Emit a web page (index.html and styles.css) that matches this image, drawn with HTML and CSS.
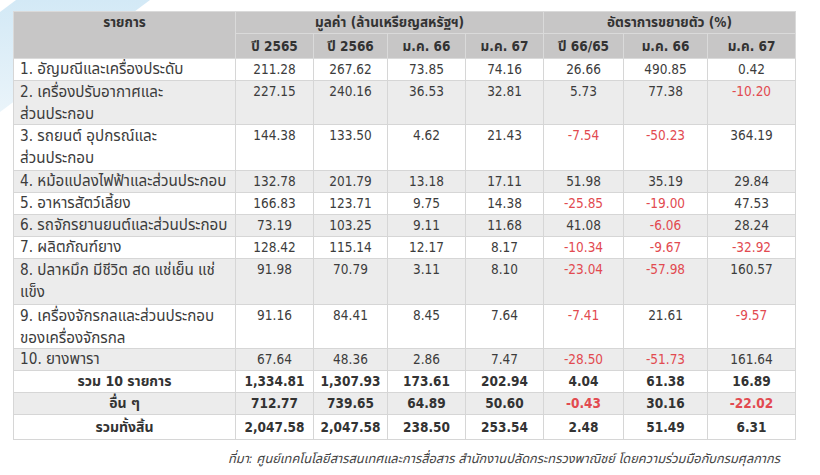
FILE: index.html
```html
<!DOCTYPE html>
<html lang="th">
<head>
<meta charset="utf-8">
<title>มูลค่าการส่งออก</title>
<link rel="stylesheet" href="styles.css">
</head>
<body>
<div class="page">
  <svg class="deco" width="200" height="140" viewBox="0 0 200 140" aria-hidden="true">
    <defs>
      <linearGradient id="g" x1="0" y1="0" x2="0" y2="1">
        <stop offset="0" stop-color="#d3e9f6"/>
        <stop offset="1" stop-color="#eaf4fa"/>
      </linearGradient>
    </defs>
    <polygon points="16,0 150,0 0,112 0,12" fill="url(#g)"/>
  </svg>
  <table class="data">
    <colgroup>
      <col class="w222"><col class="w78"><col class="w74"><col class="w78"><col class="w78"><col class="w80"><col class="w84"><col class="w88">
    </colgroup>
    <thead>
      <tr class="h1">
        <th rowspan="2" class="th-name">รายการ</th>
        <th colspan="4">มูลค่า (ล้านเหรียญสหรัฐฯ)</th>
        <th colspan="3">อัตราการขยายตัว (%)</th>
      </tr>
      <tr class="h2">
        <th>ปี 2565</th><th>ปี 2566</th><th>ม.ค. 66</th><th>ม.ค. 67</th><th>ปี 66/65</th><th>ม.ค. 66</th><th>ม.ค. 67</th>
      </tr>
    </thead>
    <tbody>
      <tr><td class="name">1. อัญมณีและเครื่องประดับ</td><td>211.28</td><td>267.62</td><td>73.85</td><td>74.16</td><td>26.66</td><td>490.85</td><td>0.42</td></tr>
      <tr class="alt"><td class="name"><div class="two t44">2. เครื่องปรับอากาศและ<br>ส่วนประกอบ</div></td><td>227.15</td><td>240.16</td><td>36.53</td><td>32.81</td><td>5.73</td><td>77.38</td><td class="neg">-10.20</td></tr>
      <tr><td class="name"><div class="two t46">3. รถยนต์ อุปกรณ์และ<br>ส่วนประกอบ</div></td><td>144.38</td><td>133.50</td><td>4.62</td><td>21.43</td><td class="neg">-7.54</td><td class="neg">-50.23</td><td>364.19</td></tr>
      <tr class="alt"><td class="name">4. หม้อแปลงไฟฟ้าและส่วนประกอบ</td><td>132.78</td><td>201.79</td><td>13.18</td><td>17.11</td><td>51.98</td><td>35.19</td><td>29.84</td></tr>
      <tr><td class="name">5. อาหารสัตว์เลี้ยง</td><td>166.83</td><td>123.71</td><td>9.75</td><td>14.38</td><td class="neg">-25.85</td><td class="neg">-19.00</td><td>47.53</td></tr>
      <tr class="alt"><td class="name">6. รถจักรยานยนต์และส่วนประกอบ</td><td>73.19</td><td>103.25</td><td>9.11</td><td>11.68</td><td>41.08</td><td class="neg">-6.06</td><td>28.24</td></tr>
      <tr><td class="name">7. ผลิตภัณฑ์ยาง</td><td>128.42</td><td>115.14</td><td>12.17</td><td>8.17</td><td class="neg">-10.34</td><td class="neg">-9.67</td><td class="neg">-32.92</td></tr>
      <tr class="alt"><td class="name"><div class="two t46">8. ปลาหมึก มีชีวิต สด แช่เย็น แช่<br>แข็ง</div></td><td>91.98</td><td>70.79</td><td>3.11</td><td>8.10</td><td class="neg">-23.04</td><td class="neg">-57.98</td><td>160.57</td></tr>
      <tr><td class="name"><div class="two t44">9. เครื่องจักรกลและส่วนประกอบ<br>ของเครื่องจักรกล</div></td><td>91.16</td><td>84.41</td><td>8.45</td><td>7.64</td><td class="neg">-7.41</td><td>21.61</td><td class="neg">-9.57</td></tr>
      <tr class="alt"><td class="name">10. ยางพารา</td><td>67.64</td><td>48.36</td><td>2.86</td><td>7.47</td><td class="neg">-28.50</td><td class="neg">-51.73</td><td>161.64</td></tr>
      <tr class="total"><td>รวม 10 รายการ</td><td>1,334.81</td><td>1,307.93</td><td>173.61</td><td>202.94</td><td>4.04</td><td>61.38</td><td>16.89</td></tr>
      <tr class="total alt"><td>อื่น ๆ</td><td>712.77</td><td>739.65</td><td>64.89</td><td>50.60</td><td class="neg">-0.43</td><td>30.16</td><td class="neg">-22.02</td></tr>
      <tr class="total grand"><td>รวมทั้งสิ้น</td><td>2,047.58</td><td>2,047.58</td><td>238.50</td><td>253.54</td><td>2.48</td><td>51.49</td><td>6.31</td></tr>
    </tbody>
  </table>
  <p class="source">ที่มา: ศูนย์เทคโนโลยีสารสนเทศและการสื่อสาร สำนักงานปลัดกระทรวงพาณิชย์ โดยความร่วมมือกับกรมศุลกากร</p>
</div>
</body>
</html>
```
FILE: styles.css
```css
html, body {
  margin: 0;
  padding: 0;
  background: #ffffff;
}
body {
  font-family: "DejaVu Sans Condensed", Tahoma, "Noto Sans Thai", "Liberation Sans", sans-serif;
  color: #3c3c3c;
}
.page {
  position: relative;
  width: 820px;
  height: 475px;
  padding: 11px 0 0 13px;
  box-sizing: border-box;
  overflow: hidden;
}
.deco {
  position: absolute;
  left: 0;
  top: 0;
  z-index: 0;
}
.data {
  position: relative;
  z-index: 1;
  width: 782px;
  table-layout: fixed;
  border-collapse: collapse;
  font-size: 13.5px;
  background: #ffffff;
}
.w222 { width: 222px; }
.w78 { width: 78px; }
.w74 { width: 74px; }
.w80 { width: 80px; }
.w84 { width: 84px; }
.w88 { width: 88px; }
.data th, .data td {
  border: 1px solid #d6d6d6;
  padding: 0;
  height: 21px;
  line-height: 21px;
  text-align: center;
  vertical-align: top;
  white-space: nowrap;
  overflow: hidden;
}
.data thead th {
  background: #c7c6c6;
  font-weight: bold;
  color: #333333;
  border-color: #dadada;
}
.h2 th { height: 24px; line-height: 24px; }
.data td.name {
  text-align: left;
  padding-left: 6px;
  font-size: 15.2px;
}
.two {
  line-height: 22px;
  overflow: hidden;
}
.t44 { height: 43px; }
.t46 { height: 45px; }
.data tbody tr.alt td { background: #ececec; }
.data .total td { font-weight: bold; color: #333333; }
.data .total td:first-child { font-size: 14px; }
.data .grand td { height: 24px; line-height: 24px; }
.data td.neg { color: #e24a50; }
.source {
  margin: 10px 40px 0 0;
  text-align: right;
  font-style: italic;
  font-size: 12.8px;
  line-height: 18px;
  color: #444444;
}
```
